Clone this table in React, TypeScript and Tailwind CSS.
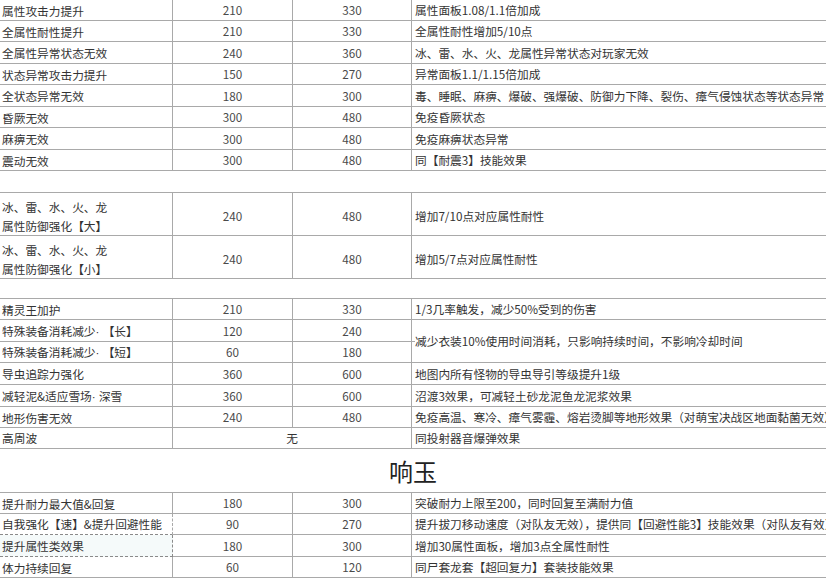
import React from "react";

const LINE = "border-[#a9a9a9]";

type R = { n: React.ReactNode; a?: string; b?: string; d?: string; h: string; np?: string };

const Dot = () => <span style={{ fontFamily: '"Liberation Sans", sans-serif' }}>· </span>;

const sec1: R[] = [
  { n: "属性攻击力提升", a: "210", b: "330", d: "属性面板1.08/1.1倍加成", h: "h-[21px]" },
  { n: "全属性耐性提升", a: "210", b: "330", d: "全属性耐性增加5/10点", h: "h-[21px]" },
  { n: "全属性异常状态无效", a: "240", b: "360", d: "冰、雷、水、火、龙属性异常状态对玩家无效", h: "h-[22px]" },
  { n: "状态异常攻击力提升", a: "150", b: "270", d: "异常面板1.1/1.15倍加成", h: "h-[21px]" },
  { n: "全状态异常无效", a: "180", b: "300", d: "毒、睡眠、麻痹、爆破、强爆破、防御力下降、裂伤、瘴气侵蚀状态等状态异常", h: "h-[22px]" },
  { n: "昏厥无效", a: "300", b: "480", d: "免疫昏厥状态", h: "h-[21px]" },
  { n: "麻痹无效", a: "300", b: "480", d: "免疫麻痹状态异常", h: "h-[22px]" },
  { n: "震动无效", a: "300", b: "480", d: "同【耐震3】技能效果", h: "h-[21px]" },
];

const sec2: R[] = [
  {
    n: (
      <>
        冰、雷、水、火、龙
        <br />
        属性防御强化【大】
      </>
    ),
    a: "240",
    b: "480",
    d: "增加7/10点对应属性耐性",
    h: "h-[43px]",
    np: "pt-[3px]",
  },
  {
    n: (
      <>
        冰、雷、水、火、龙
        <br />
        属性防御强化【小】
      </>
    ),
    a: "240",
    b: "480",
    d: "增加5/7点对应属性耐性",
    h: "h-[43px]",
    np: "pt-[3px]",
  },
];

const sec3b: R[] = [
  { n: "导虫追踪力强化", a: "360", b: "600", d: "地图内所有怪物的导虫导引等级提升1级", h: "h-[22px]" },
  {
    n: (
      <>
        减轻泥&适应雪场<Dot />深雪
      </>
    ),
    a: "360",
    b: "600",
    d: "沼渡3效果，可减轻土砂龙泥鱼龙泥浆效果",
    h: "h-[22px]",
  },
  { n: "地形伤害无效", a: "240", b: "480", d: "免疫高温、寒冷、瘴气雾霾、熔岩烫脚等地形效果（对萌宝决战区地面黏菌无效）", h: "h-[21px]" },
];

function Row({ r }: { r: R }) {
  return (
    <div className={`flex ${r.h}`}>
      <div className={`w-[173px] shrink-0 border-r border-b ${LINE} pl-[2px] flex items-center leading-[19px] ${r.np ?? ""}`}>
        <span>{r.n}</span>
      </div>
      <div className={`w-[120px] shrink-0 border-r border-b ${LINE} flex items-center justify-center text-[#4a4a4a] ${r.np ?? ""}`}>
        {r.a}
      </div>
      <div className={`w-[119px] shrink-0 border-r border-b ${LINE} flex items-center justify-center text-[#4a4a4a] ${r.np ?? ""}`}>
        {r.b}
      </div>
      <div className={`flex-1 border-b ${LINE} pl-[3px] flex items-center whitespace-nowrap ${r.np ?? ""}`}>{r.d}</div>
    </div>
  );
}

export default function App() {
  return (
    <div
      className="w-[826px] h-[578px] overflow-hidden bg-white text-[#333333] text-[11.7px]"
      style={{ fontFamily: '"Noto Sans CJK SC", "Noto Sans", sans-serif' }}
    >
      <div className="w-[1100px]">
        {sec1.map((r, i) => (
          <Row key={i} r={r} />
        ))}
        <div className="h-[21px]" />
        <div className={`border-t ${LINE}`}>
          {sec2.map((r, i) => (
            <Row key={i} r={r} />
          ))}
        </div>
        <div className="h-[19px]" />
        <div className={`border-t ${LINE}`}>
          <Row r={{ n: "精灵王加护", a: "210", b: "330", d: "1/3几率触发，减少50%受到的伤害", h: "h-[21px]" }} />
          <div className="flex">
            <div className="w-[412px] shrink-0">
              <Row
                r={{
                  n: (
                    <>
                      特殊装备消耗减少<Dot />【长】
                    </>
                  ),
                  a: "120",
                  b: "240",
                  h: "h-[22px]",
                }}
              />
              <Row
                r={{
                  n: (
                    <>
                      特殊装备消耗减少<Dot />【短】
                    </>
                  ),
                  a: "60",
                  b: "180",
                  h: "h-[21px]",
                }}
              />
            </div>
            <div className={`flex-1 border-b ${LINE} pl-[3px] flex items-center whitespace-nowrap`}>
              减少衣装10%使用时间消耗，只影响持续时间，不影响冷却时间
            </div>
          </div>
          {sec3b.map((r, i) => (
            <Row key={i} r={r} />
          ))}
          <div className="flex h-[21px]">
            <div className={`w-[173px] shrink-0 border-r border-b ${LINE} pl-[2px] flex items-center`}>高周波</div>
            <div className={`w-[239px] shrink-0 border-r border-b ${LINE} flex items-center justify-center`}>无</div>
            <div className={`flex-1 border-b ${LINE} pl-[3px] flex items-center whitespace-nowrap`}>
              同投射器音爆弹效果
            </div>
          </div>
        </div>
        <div className="w-[826px] h-[43px] flex items-center justify-center text-[24px] text-[#222222]">
          响玉
        </div>
        <div className={`border-t ${LINE}`}>
          <Row r={{ n: "提升耐力最大值&回复", a: "180", b: "300", d: "突破耐力上限至200，同时回复至满耐力值", h: "h-[21px]" }} />
          <div className="flex h-[21px]">
            <div className={`w-[173px] shrink-0 border-r ${LINE} border-b border-b-[#8a8a8a] border-dashed border-t-0 border-l-0 pl-[2px] flex items-center`}>
              自我强化【速】&提升回避性能
            </div>
            <div className={`w-[120px] shrink-0 border-r border-b ${LINE} flex items-center justify-center text-[#4a4a4a]`}>90</div>
            <div className={`w-[119px] shrink-0 border-r border-b ${LINE} flex items-center justify-center text-[#4a4a4a]`}>270</div>
            <div className={`flex-1 border-b ${LINE} pl-[3px] flex items-center whitespace-nowrap`}>
              提升拔刀移动速度（对队友无效），提供同【回避性能3】技能效果（对队友有效）
            </div>
          </div>
          <div className="flex h-[22px]">
            <div className="w-[173px] shrink-0 border-r border-b border-dashed border-[#8a8a8a] bg-[#f5fafa] pl-[2px] flex items-center">
              提升属性类效果
            </div>
            <div className={`w-[120px] shrink-0 border-r border-b ${LINE} flex items-center justify-center text-[#4a4a4a]`}>180</div>
            <div className={`w-[119px] shrink-0 border-r border-b ${LINE} flex items-center justify-center text-[#4a4a4a]`}>300</div>
            <div className={`flex-1 border-b ${LINE} pl-[3px] flex items-center whitespace-nowrap`}>
              增加30属性面板，增加3点全属性耐性
            </div>
          </div>
          <Row r={{ n: "体力持续回复", a: "60", b: "120", d: "同尸套龙套【超回复力】套装技能效果", h: "h-[21px]" }} />
        </div>
      </div>
    </div>
  );
}
